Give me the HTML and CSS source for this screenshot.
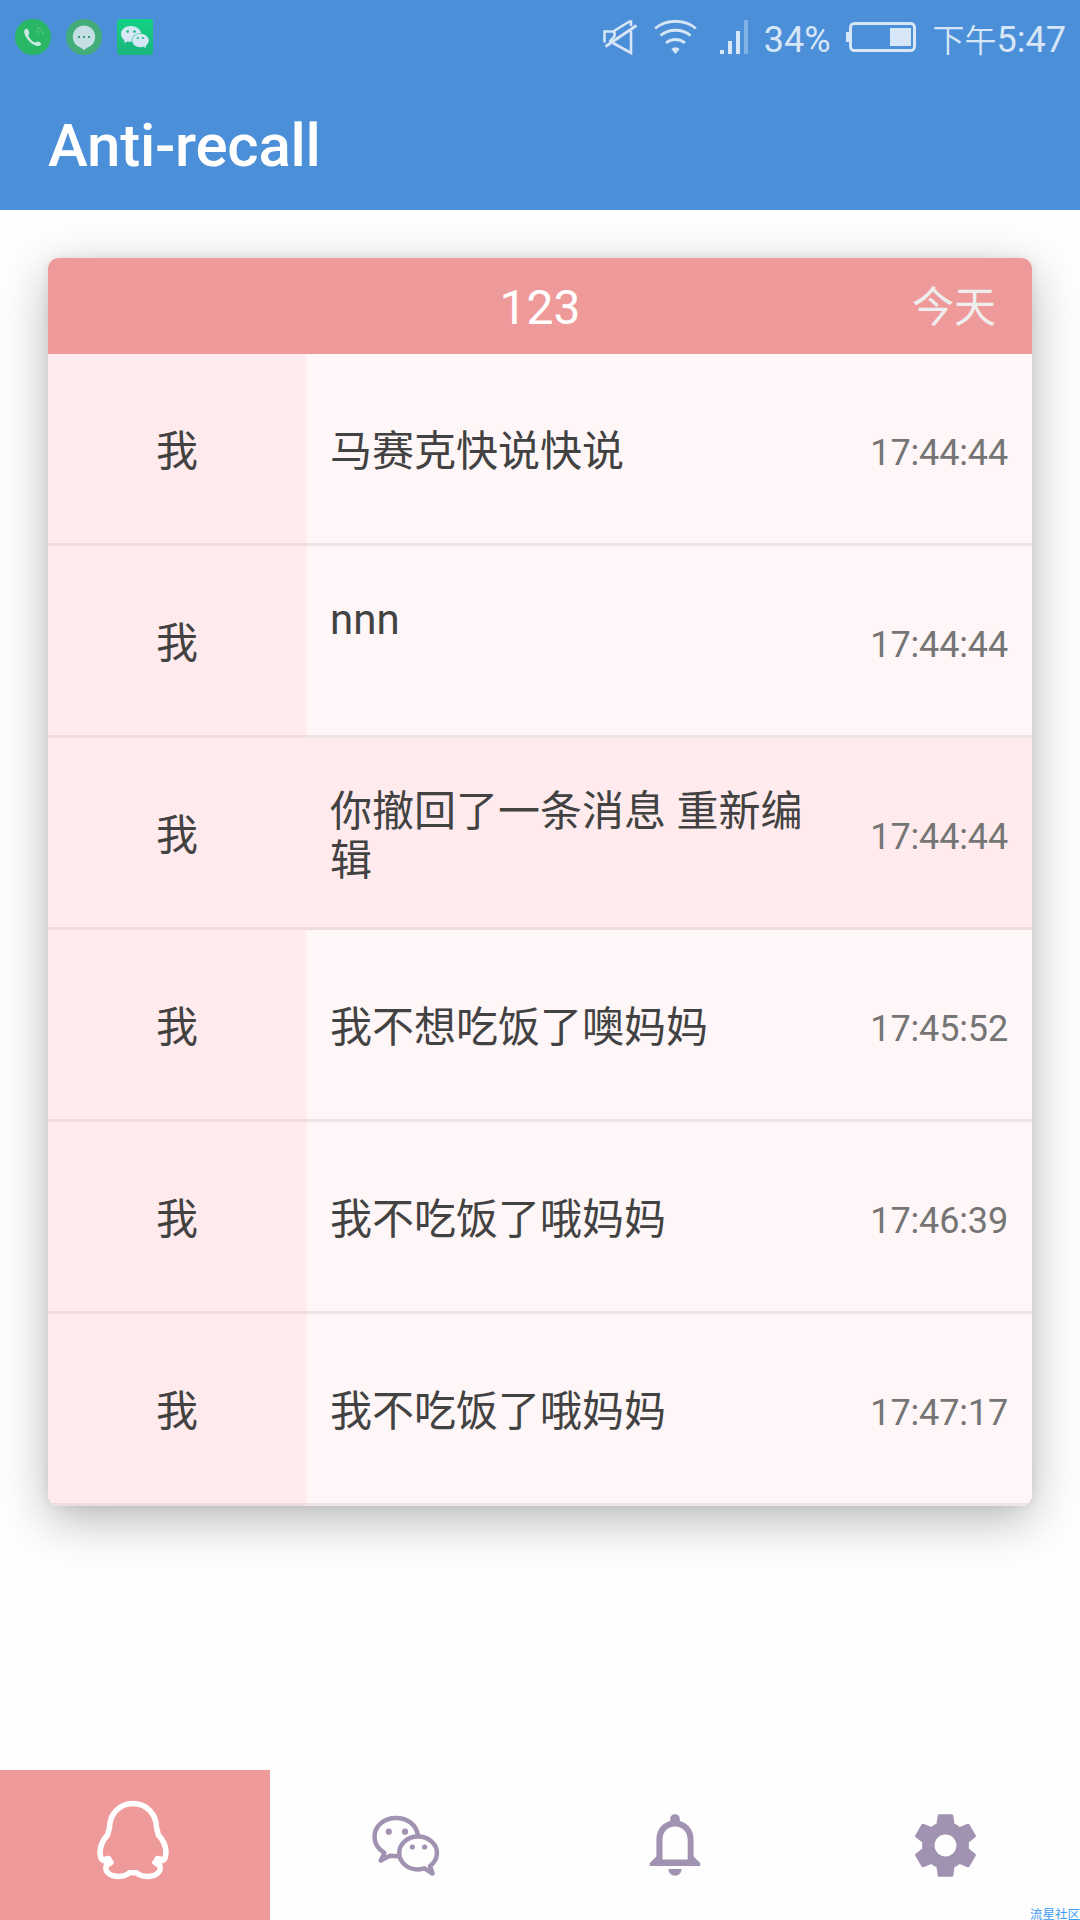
FILE: index.html
```
<!DOCTYPE html>
<html lang="zh-CN">
<head>
    <meta charset="UTF-8">
    <meta name="viewport" content="width=device-width, initial-scale=1.0">
    <title>Anti-recall</title>
    <link rel="stylesheet" href="styles.css">
</head>
<body>
    <header class="app-header">
        <!-- Status bar -->
        <div class="status-bar">
            <div class="notifications">
                <svg width="36" height="36" viewBox="0 0 36 36">
                    <circle cx="18" cy="18" r="18" fill="#29b765"/>
                    <path d="M10 10.500C12 8.500 14 11.500 14.300 13.500C14.500 15 13 15.500 13.500 17C15 20.500 17.500 22.500 19.500 23.300C21 23.800 22 22.200 23.500 22.800C25.500 23.600 27 25 25.300 26.200C22 28.300 17.500 25.500 14.500 22.500C11 19 7.500 13 10 10.500Z" fill="#c9e9e2"/>
                    <path d="M20.500 14.500l1 1M21 11.500q3 .5 3.800 3.800M22 8.500q5 1.500 6 6" fill="none" stroke="#7ed4a4" stroke-width="1" stroke-dasharray="1.500 1"/>
                </svg>
                <svg width="36" height="36" viewBox="0 0 36 36">
                    <circle cx="18" cy="18" r="18" fill="#43ad79"/>
                    <path d="M18 6.500a11.300 11.300 0 0 1 3 22.200L18 31l-3-2.300A11.300 11.300 0 0 1 18 6.500Z" fill="#c5dfe4"/>
                    <path d="M12 17h2v2h-2zM17 17h2v2h-2zM22 17h2v2h-2z" fill="#30a36c"/>
                </svg>
                <svg width="36" height="36" viewBox="0 0 36 36">
                    <defs>
                        <linearGradient id="wechatBg" x1="0" y1="0" x2="0" y2="1">
                            <stop offset="0" stop-color="#14d284"/>
                            <stop offset="1" stop-color="#1bb47c"/>
                        </linearGradient>
                    </defs>
                    <rect width="36" height="36" rx="3.500" fill="url(#wechatBg)"/>
                    <path d="M14 7C8.400 7 4 10.500 4 15c0 2.500 1.300 4.800 3.500 6.300L7.300 24l3.200-1.500c1.300.3 2.500.5 4 .5C14 17.500 18.500 14 24.300 14.200 23.300 10 19 7 14 7Z" fill="#d6e7f6"/>
                    <path d="M23.500 14.800c-4.600 0-8.300 3-8.300 6.700s3.700 6.700 8.300 6.700c1.200 0 2.300-.2 3.300-.5l2.200 1.300-.2-2.500c1.900-1.200 3-3 3-5 0-3.700-3.700-6.700-8.300-6.700Z" fill="#d6e7f6"/>
                    <g fill="#17b97e"><circle cx="10.700" cy="12.500" r="1.300"/><circle cx="17.500" cy="12.500" r="1.300"/><circle cx="20.800" cy="19" r="1.100"/><circle cx="26" cy="19" r="1.100"/></g>
                </svg>
            </div>
            <div class="system-info">
                <svg class="mute" width="35" height="35" viewBox="0 0 35 35">
                    <path d="M1.500 22.500V11.500H10L26.500 1.500H28V6M11.500 11.500V16L6.500 22M10 23L28 33V11" fill="none" stroke="#d7e6f6" stroke-width="2.600"/>
                    <path d="M2.500 26.500L33.500 5.500" stroke="#d7e6f6" stroke-width="2.800"/>
                </svg>
                <svg class="wifi" width="43" height="35" viewBox="0 0 43 35">
                    <g fill="none" stroke="#d7e6f6" stroke-width="2.800">
                        <path d="M1.200 8.500C12-1 31-1 41.800 8.500"/>
                        <path d="M6.500 15.500C14.500 8.500 28.500 8.500 36.500 15.500"/>
                        <path d="M12 23C17.500 18.300 25.500 18.300 31 23"/>
                    </g>
                    <path d="M17.300 29q4.200-3.300 8.400 0L21.500 34Z" fill="#d7e6f6"/>
                </svg>
                <svg class="signal" width="28" height="34" viewBox="0 0 28 34">
                    <path d="M0 30h4v4H0zM8 21h4v13H8zM16 11h4v23h-4z" fill="#d7e6f6"/>
                    <path d="M24 0h4v34h-4z" fill="#82b2e5"/>
                </svg>
                <span class="percent">34%</span>
                <svg class="battery" width="70" height="30" viewBox="0 0 70 30">
                    <path d="M0 10h4v10H0z" fill="#d7e6f6"/>
                    <rect x="4.500" y="1.500" width="64" height="27" rx="4" fill="none" stroke="#d7e6f6" stroke-width="3"/>
                    <path d="M44 6h21v18H44z" fill="#d7e6f6"/>
                </svg>
                <span class="clock"><span class="clock-period">下午</span>5:47</span>
            </div>
        </div>
        <h1>Anti-recall</h1>
    </header>

    <main>
        <div class="card">
            <div class="card-header">
                <span></span>
                <span class="card-title">123</span>
                <span class="card-date">今天</span>
            </div>
            <div class="row">
                <div class="sender">我</div>
                <div class="message">马赛克快说快说</div>
                <div class="time">17:44:44</div>
            </div>
            <div class="row">
                <div class="sender">我</div>
                <div class="message">nnn<br>&nbsp;</div>
                <div class="time">17:44:44</div>
            </div>
            <div class="row recalled">
                <div class="sender">我</div>
                <div class="message">你撤回了一条消息 重新编辑</div>
                <div class="time">17:44:44</div>
            </div>
            <div class="row">
                <div class="sender">我</div>
                <div class="message">我不想吃饭了噢妈妈</div>
                <div class="time">17:45:52</div>
            </div>
            <div class="row">
                <div class="sender">我</div>
                <div class="message">我不吃饭了哦妈妈</div>
                <div class="time">17:46:39</div>
            </div>
            <div class="row">
                <div class="sender">我</div>
                <div class="message">我不吃饭了哦妈妈</div>
                <div class="time">17:47:17</div>
            </div>
        </div>
    </main>

    <!-- Bottom navigation -->
    <nav class="bottom-nav">
        <div class="nav-item active">
            <svg class="penguin" width="74" height="80" viewBox="0 0 74 80">
                <path d="M37 3.500C23.500 3.500 13.800 14 13.500 27.500L11.600 35C5.500 41.500 3.500 49 4.300 55C4.700 59 6.500 61 8.300 59.500L12.500 58.500L15 62.500L10.500 65.500C8 71 13 76.500 23 76.500C28 76.500 31 75 33.500 72.800H40.500C43 75 46 76.500 51 76.500C61 76.500 66 71 63.500 65.500L59 62.500L61.500 58.500L65.700 59.500C67.500 61 69.300 59 69.700 55C70.500 49 68.500 41.500 62.400 35L60.500 27.500C60.200 14 50.500 3.500 37 3.500Z" fill="none" stroke="#fff" stroke-width="5.500" stroke-linejoin="round"/>
                <path d="M12 58L15.500 62.500L9 63.500ZM62 58L58.500 62.500L65 63.500Z" fill="#fff" stroke="#fff" stroke-width="3" stroke-linejoin="round"/>
            </svg>
        </div>
        <div class="nav-item">
            <svg class="wechat" width="70" height="64" viewBox="0 0 70 64">
                <g fill="none" stroke="#a092b0" stroke-width="4.500" stroke-linejoin="round" stroke-linecap="round">
                    <path d="M48 21.500C46.500 11 37.500 4 26 4C14 4 4.500 12 4.500 22.700C4.500 30 9 35.500 14.500 39L10.700 46.500L20 41.700L28 42.300"/>
                    <path d="M48 22.500C37.500 22.500 29.200 30 29.200 39C29.200 48 37.500 55.500 48 55.500C50.500 55.500 52.500 54.800 54.500 54.300L62.500 59.500L60 52C64 49 67 44.500 67 39C67 30 58.500 22.500 48 22.500Z"/>
                </g>
                <g fill="#a092b0"><circle cx="18.800" cy="17.700" r="3.100"/><circle cx="35" cy="17.700" r="3.100"/><circle cx="42.300" cy="33" r="2.600"/><circle cx="54.600" cy="33" r="2.600"/></g>
            </svg>
        </div>
        <div class="nav-item">
            <svg width="54" height="64" viewBox="0 0 54 64">
                <path d="M27 1.300C24.200 1.300 22.200 3.300 22.200 6V8C14 10 8.400 17 8.400 26.500V43.500L1.800 50V53H52.200V50L45.600 43.500V26.500C45.600 17 40 10 31.800 8V6C31.800 3.300 29.800 1.300 27 1.300ZM14.500 46.500V27C14.500 19 19.500 13.500 27 13.500S39.700 19 39.700 27V46.500Z" fill="#a092b0" fill-rule="evenodd"/>
                <path d="M20.500 56H33.500C33.500 60 30.500 62.700 27 62.700S20.500 60 20.500 56Z" fill="#a092b0"/>
            </svg>
        </div>
        <div class="nav-item">
            <svg width="75" height="75" viewBox="0 0 24 24">
                <path fill="#a092b0" d="M19.430 12.980c.04-.32.07-.64.07-.98s-.03-.66-.07-.98l2.110-1.650c.19-.15.24-.42.12-.64l-2-3.460c-.12-.22-.39-.3-.61-.22l-2.490 1c-.52-.4-1.080-.73-1.690-.98l-.38-2.650C14.460 2.180 14.250 2 14 2h-4c-.25 0-.46.18-.49.42l-.38 2.650c-.61.25-1.170.59-1.690.98l-2.490-1c-.23-.09-.49 0-.61.22l-2 3.460c-.13.22-.07.49.12.64l2.110 1.650c-.04.32-.07.65-.07.98s.03.66.07.98l-2.110 1.650c-.19.15-.24.42-.12.64l2 3.460c.12.22.39.3.61.22l2.490-1c.52.4 1.080.73 1.690.98l.38 2.650c.03.24.24.42.49.42h4c.25 0 .46-.18.49-.42l.38-2.650c.61-.25 1.170-.59 1.690-.98l2.490 1c.23.09.49 0 .61-.22l2-3.460c.12-.22.07-.49-.12-.64l-2.110-1.650zM12 15.500c-1.930 0-3.500-1.570-3.500-3.500s1.570-3.500 3.500-3.500 3.500 1.570 3.500 3.500-1.570 3.500-3.500 3.500z"/>
            </svg>
        </div>
        <span class="watermark">流星社区</span>
    </nav>
</body>
</html>
```
FILE: styles.css
```
* {
    box-sizing: border-box;
}

body {
    font-family: Roboto, "Noto Sans CJK SC", sans-serif;
    background: #fefefe;
    color: #424242;
    margin: 0;
    height: 1920px;
    display: flex;
    flex-direction: column;
    overflow: hidden;
}

svg {
    display: block;
    flex-shrink: 0;
}

.app-header {
    height: 210px;
    background: #4c8fd9;
    color: #fff;
}

.status-bar {
    height: 74px;
    padding: 0 14px 0 15px;
    display: flex;
    justify-content: space-between;
    align-items: center;
    color: #d7e6f6;
    font-size: 36px;
}

.notifications {
    display: flex;
    gap: 15px;
}

.system-info {
    display: flex;
    align-items: center;
    line-height: 42px;
    white-space: nowrap;
}

.wifi {
    margin-left: 16px;
}

.signal {
    margin-left: 23px;
}

.percent {
    margin: 5px 15px 0 16px;
}

.clock {
    margin: 7px 0 0 17px;
}

.clock-period {
    font-size: 32px;
    font-weight: 350;
}

h1 {
    margin: 0;
    padding: 37px 48px 0;
    font-size: 60px;
    line-height: 70px;
    font-weight: 500;
    letter-spacing: -0.25px;
}

main {
    flex: 1;
    padding: 48px;
}

.card {
    border-radius: 11px;
    overflow: hidden;
    box-shadow: 0 14px 48px rgba(0, 0, 0, 0.28), 0 0 10px rgba(0, 0, 0, 0.08);
}

.card-header {
    height: 96px;
    padding: 0 36px;
    display: grid;
    grid-template-columns: 1fr auto 1fr;
    align-items: center;
    background: #ef9a9a;
    color: #fff;
}

.card-title {
    padding-top: 2px;
    font-size: 48px;
}

.card-date {
    padding-bottom: 5px;
    font-size: 42px;
    color: #eee;
    text-align: right;
}

.row {
    height: 192px;
    display: grid;
    grid-template-columns: 258px 1fr 192px;
    background: #fff6f7;
    font-size: 42px;
    line-height: 49px;
}

.sender,
.message,
.time {
    display: flex;
    align-items: center;
    padding-top: 6px;
    border-bottom: 3px solid rgba(0, 0, 0, 0.065);
}

.sender {
    justify-content: center;
    background: #ffebed;
}

.message {
    padding-left: 24px;
}

.time {
    justify-content: flex-end;
    padding-top: 9px;
    padding-right: 24px;
    font-size: 36px;
    letter-spacing: -0.15px;
    color: #757575;
}

.recalled {
    background: #ffebed;
}

.bottom-nav {
    position: relative;
    height: 150px;
    display: grid;
    grid-template-columns: repeat(4, 1fr);
}

.nav-item {
    display: flex;
    justify-content: center;
    align-items: center;
}

.nav-item.active {
    background: #ef9a9a;
}

.penguin {
    margin: 0 4px 10px 0;
}

.wechat {
    margin-top: 2px;
}

/* sits over the corner of the last tab */
.watermark {
    position: absolute;
    right: 0;
    bottom: -3px;
    font-size: 12.500px;
    line-height: 16px;
    color: #3d9bf3;
}
```
